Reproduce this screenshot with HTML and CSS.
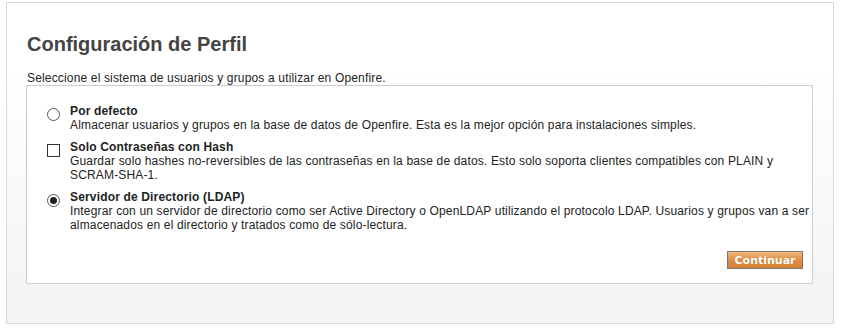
FILE: index.html
```html
<!DOCTYPE html>
<html lang="es">
<head>
<meta charset="utf-8">
<title>Configuración de Perfil</title>
<link rel="stylesheet" href="styles.css">
</head>
<body>
<div class="page">
  <h1 class="title">Configuración de Perfil</h1>
  <p class="intro">Seleccione el sistema de usuarios y grupos a utilizar en Openfire.</p>
  <div class="panel">
    <div class="option">
      <span class="radio"></span>
      <div class="option-text">
        <div class="option-label">Por defecto</div>
        <div class="option-desc">Almacenar usuarios y grupos en la base de datos de Openfire. Esta es la mejor opción para instalaciones simples.</div>
      </div>
    </div>
    <div class="option">
      <span class="checkbox"></span>
      <div class="option-text">
        <div class="option-label">Solo Contraseñas con Hash</div>
        <div class="option-desc">Guardar solo hashes no-reversibles de las contraseñas en la base de datos. Esto solo soporta clientes compatibles con PLAIN y SCRAM-SHA-1.</div>
      </div>
    </div>
    <div class="option">
      <span class="radio checked"></span>
      <div class="option-text">
        <div class="option-label">Servidor de Directorio (LDAP)</div>
        <div class="option-desc">Integrar con un servidor de directorio como ser Active Directory o OpenLDAP utilizando el protocolo LDAP. Usuarios y grupos van a ser almacenados en el directorio y tratados como de sólo-lectura.</div>
      </div>
    </div>
    <div class="actions">
      <button class="btn" type="button">Continuar</button>
    </div>
  </div>
</div>
</body>
</html>
```
FILE: styles.css
```css
html, body {
  margin: 0;
  padding: 0;
  background: #fff;
}
body {
  padding: 2px 10px 6px 6px;
  font-family: "Liberation Sans", Arial, sans-serif;
  font-size: 12px;
  letter-spacing: 0.16px;
  color: #222;
}
.page {
  border: 1px solid #d9d9d9;
  background: linear-gradient(to bottom, #ffffff 0%, #ffffff 20%, #f3f3f3 100%);
  padding: 1px 20px 38px 19px;
  height: 281px;
  width: 787px;
}
.title {
  margin: 29px 0 0 1px;
  font-size: 20px;
  line-height: 22px;
  font-weight: bold;
  letter-spacing: 0;
  color: #444;
}
.intro {
  margin: 17px 0 0 1px;
  line-height: 13px;
  color: #222;
}
.panel {
  border: 1px solid #cccccc;
  background: #fff;
  padding: 18px 2px 14px 20px;
}
.option {
  display: flex;
  align-items: flex-start;
  margin-bottom: 8px;
}
.option-text {
  margin-left: 10px;
  flex: 1;
}
.option-label {
  font-weight: bold;
  line-height: 14px;
  color: #222;
}
.option-desc {
  line-height: 14px;
  color: #222;
}
.radio {
  flex: none;
  width: 11px;
  height: 11px;
  border: 1px solid #555;
  border-radius: 50%;
  margin-top: 4px;
  position: relative;
  background: #fff;
}
.radio.checked::after {
  content: "";
  position: absolute;
  left: 2px;
  top: 2px;
  width: 7px;
  height: 7px;
  border-radius: 50%;
  background: #222;
}
.checkbox {
  flex: none;
  width: 11px;
  height: 11px;
  border: 1px solid #333;
  margin-top: 4px;
  background: #fff;
}
.actions {
  display: flex;
  justify-content: flex-end;
  margin-top: 19px;
  margin-right: 7px;
}
.btn {
  font-family: "DejaVu Sans", Verdana, sans-serif;
  font-weight: bold;
  font-size: 11px;
  letter-spacing: 0;
  color: #fff;
  height: 18px;
  width: 76px;
  padding: 0;
  border: 1px solid #777;
  background: linear-gradient(to bottom, #f2b77a 0%, #e08f45 50%, #d67f33 100%);
  text-shadow: 0 0 1px #b86a20;
  cursor: pointer;
}
```
